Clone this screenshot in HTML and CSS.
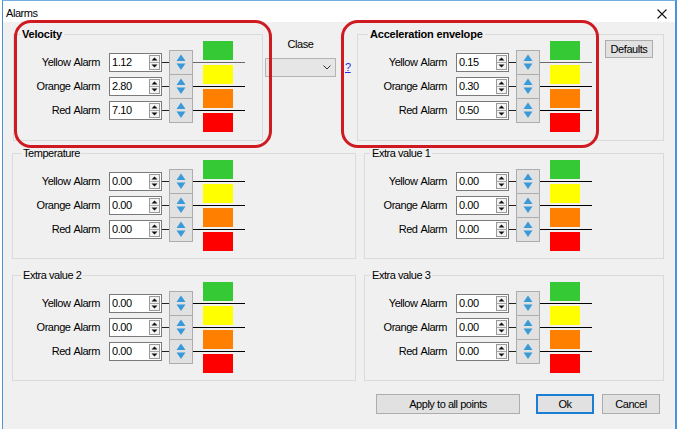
FILE: index.html
```html
<!DOCTYPE html>
<html>
<head>
<meta charset="utf-8">
<title>Alarms</title>
<link rel="stylesheet" href="styles.css">
</head>
<body>
<svg class="defs" width="0" height="0" aria-hidden="true">
  <symbol id="spin" viewBox="0 0 11 15">
    <rect x="0.5" y="0.5" width="10" height="14" fill="#f3f3f3" stroke="#9a9a9a"/>
    <line x1="1" y1="7.5" x2="10" y2="7.5" stroke="#a8a8a8"/>
    <path d="M5.5 2.5 L8.5 5.5 L2.5 5.5 Z" fill="#111"/>
    <path d="M2.5 9.5 L8.5 9.5 L5.5 12.5 Z" fill="#111"/>
  </symbol>
  <symbol id="ud" viewBox="0 0 22 23">
    <path d="M11 3.5 L15.5 10 L6.5 10 Z" fill="#3a9ad9"/>
    <path d="M6.5 12.5 L15.5 12.5 L11 19 Z" fill="#3a9ad9"/>
  </symbol>
</svg>
<div class="window">
  <div class="titlebar">
    <span class="title">Alarms</span>
    <svg class="close" width="10" height="10" viewBox="0 0 10 10"><path d="M0.5 0.5 L9.5 9.5 M9.5 0.5 L0.5 9.5" stroke="#111" stroke-width="1.1" fill="none"/></svg>
  </div>
  <div class="client">
    <div class="row row1">
      <div class="group g-velocity">
        <div class="gtitle bold">Velocity</div>
        <div class="alarms">
          <span class="lbl r1">Yellow Alarm</span>
          <span class="inp r1"><span>1.12</span><svg class="spin"><use href="#spin"/></svg></span>
          <span class="dash r1"></span>
          <span class="sbtn r1"><svg class="ud"><use href="#ud"/></svg></span>
          <span class="line r1 dim"></span>
          <span class="lbl r2">Orange Alarm</span>
          <span class="inp r2"><span>2.80</span><svg class="spin"><use href="#spin"/></svg></span>
          <span class="dash r2"></span>
          <span class="sbtn r2"><svg class="ud"><use href="#ud"/></svg></span>
          <span class="line r2"></span>
          <span class="lbl r3">Red Alarm</span>
          <span class="inp r3"><span>7.10</span><svg class="spin"><use href="#spin"/></svg></span>
          <span class="dash r3"></span>
          <span class="sbtn r3"><svg class="ud"><use href="#ud"/></svg></span>
          <span class="line r3"></span>
          <span class="sw s1"></span><span class="sw s2"></span><span class="sw s3"></span><span class="sw s4"></span>
        </div>
      </div>
      <div class="middle">
        <span class="clase-label">Clase</span>
        <span class="combo"><svg width="8" height="5" viewBox="0 0 8 5"><path d="M0.5 0.5 L4 4 L7.5 0.5" stroke="#333" fill="none"/></svg></span>
        <a class="help" href="#">?</a>
      </div>
      <div class="group g-accel">
        <div class="gtitle bold">Acceleration envelope</div>
        <div class="accel-body">
          <div class="alarms">
            <span class="lbl r1">Yellow Alarm</span>
            <span class="inp r1"><span>0.15</span><svg class="spin"><use href="#spin"/></svg></span>
            <span class="dash r1"></span>
            <span class="sbtn r1"><svg class="ud"><use href="#ud"/></svg></span>
            <span class="line r1 dim"></span>
            <span class="lbl r2">Orange Alarm</span>
            <span class="inp r2"><span>0.30</span><svg class="spin"><use href="#spin"/></svg></span>
            <span class="dash r2"></span>
            <span class="sbtn r2"><svg class="ud"><use href="#ud"/></svg></span>
            <span class="line r2"></span>
            <span class="lbl r3">Red Alarm</span>
            <span class="inp r3"><span>0.50</span><svg class="spin"><use href="#spin"/></svg></span>
            <span class="dash r3"></span>
            <span class="sbtn r3"><svg class="ud"><use href="#ud"/></svg></span>
            <span class="line r3"></span>
            <span class="sw s1"></span><span class="sw s2"></span><span class="sw s3"></span><span class="sw s4"></span>
          </div>
          <span class="btn defaults">Defaults</span>
        </div>
      </div>
    </div>

    <div class="row row2">
      <div class="group g-left">
        <div class="gtitle">Temperature</div>
        <div class="alarms">
          <span class="lbl r1">Yellow Alarm</span>
          <span class="inp r1"><span>0.00</span><svg class="spin"><use href="#spin"/></svg></span>
          <span class="dash r1"></span>
          <span class="sbtn r1"><svg class="ud"><use href="#ud"/></svg></span>
          <span class="line r1"></span>
          <span class="lbl r2">Orange Alarm</span>
          <span class="inp r2"><span>0.00</span><svg class="spin"><use href="#spin"/></svg></span>
          <span class="dash r2"></span>
          <span class="sbtn r2"><svg class="ud"><use href="#ud"/></svg></span>
          <span class="line r2"></span>
          <span class="lbl r3">Red Alarm</span>
          <span class="inp r3"><span>0.00</span><svg class="spin"><use href="#spin"/></svg></span>
          <span class="dash r3"></span>
          <span class="sbtn r3"><svg class="ud"><use href="#ud"/></svg></span>
          <span class="line r3"></span>
          <span class="sw s1"></span><span class="sw s2"></span><span class="sw s3"></span><span class="sw s4"></span>
        </div>
      </div>
      <div class="group g-right">
        <div class="gtitle">Extra value 1</div>
        <div class="alarms">
          <span class="lbl r1">Yellow Alarm</span>
          <span class="inp r1"><span>0.00</span><svg class="spin"><use href="#spin"/></svg></span>
          <span class="dash r1"></span>
          <span class="sbtn r1"><svg class="ud"><use href="#ud"/></svg></span>
          <span class="line r1"></span>
          <span class="lbl r2">Orange Alarm</span>
          <span class="inp r2"><span>0.00</span><svg class="spin"><use href="#spin"/></svg></span>
          <span class="dash r2"></span>
          <span class="sbtn r2"><svg class="ud"><use href="#ud"/></svg></span>
          <span class="line r2"></span>
          <span class="lbl r3">Red Alarm</span>
          <span class="inp r3"><span>0.00</span><svg class="spin"><use href="#spin"/></svg></span>
          <span class="dash r3"></span>
          <span class="sbtn r3"><svg class="ud"><use href="#ud"/></svg></span>
          <span class="line r3"></span>
          <span class="sw s1"></span><span class="sw s2"></span><span class="sw s3"></span><span class="sw s4"></span>
        </div>
      </div>
    </div>

    <div class="row row3">
      <div class="group g-left">
        <div class="gtitle">Extra value 2</div>
        <div class="alarms">
          <span class="lbl r1">Yellow Alarm</span>
          <span class="inp r1"><span>0.00</span><svg class="spin"><use href="#spin"/></svg></span>
          <span class="dash r1"></span>
          <span class="sbtn r1"><svg class="ud"><use href="#ud"/></svg></span>
          <span class="line r1"></span>
          <span class="lbl r2">Orange Alarm</span>
          <span class="inp r2"><span>0.00</span><svg class="spin"><use href="#spin"/></svg></span>
          <span class="dash r2"></span>
          <span class="sbtn r2"><svg class="ud"><use href="#ud"/></svg></span>
          <span class="line r2"></span>
          <span class="lbl r3">Red Alarm</span>
          <span class="inp r3"><span>0.00</span><svg class="spin"><use href="#spin"/></svg></span>
          <span class="dash r3"></span>
          <span class="sbtn r3"><svg class="ud"><use href="#ud"/></svg></span>
          <span class="line r3"></span>
          <span class="sw s1"></span><span class="sw s2"></span><span class="sw s3"></span><span class="sw s4"></span>
        </div>
      </div>
      <div class="group g-right">
        <div class="gtitle">Extra value 3</div>
        <div class="alarms">
          <span class="lbl r1">Yellow Alarm</span>
          <span class="inp r1"><span>0.00</span><svg class="spin"><use href="#spin"/></svg></span>
          <span class="dash r1"></span>
          <span class="sbtn r1"><svg class="ud"><use href="#ud"/></svg></span>
          <span class="line r1"></span>
          <span class="lbl r2">Orange Alarm</span>
          <span class="inp r2"><span>0.00</span><svg class="spin"><use href="#spin"/></svg></span>
          <span class="dash r2"></span>
          <span class="sbtn r2"><svg class="ud"><use href="#ud"/></svg></span>
          <span class="line r2"></span>
          <span class="lbl r3">Red Alarm</span>
          <span class="inp r3"><span>0.00</span><svg class="spin"><use href="#spin"/></svg></span>
          <span class="dash r3"></span>
          <span class="sbtn r3"><svg class="ud"><use href="#ud"/></svg></span>
          <span class="line r3"></span>
          <span class="sw s1"></span><span class="sw s2"></span><span class="sw s3"></span><span class="sw s4"></span>
        </div>
      </div>
    </div>

    <div class="buttons">
      <span class="btn apply">Apply to all points</span>
      <span class="btn ok">Ok</span>
      <span class="btn cancel">Cancel</span>
    </div>
  </div>
  <div class="ring ring-left"></div>
  <div class="ring ring-right"></div>
</div>
</body>
</html>
```

FILE: styles.css
```css
* { box-sizing: border-box; }

html, body {
  margin: 0;
  padding: 0;
  background: #ffffff;
}

body {
  width: 678px;
  height: 429px;
  overflow: hidden;
  font-family: "Liberation Sans", Arial, sans-serif;
  font-size: 11px;
  letter-spacing: -0.45px;
  color: #000;
}

.defs {
  position: absolute;
  width: 0;
  height: 0;
  overflow: hidden;
}

.window {
  position: relative;
  margin-left: 2px;
  width: 675px;
  height: 429px;
  border-top: 1px solid #74aee2;
  border-left: 1px solid #4a94d8;
  border-right: 2px solid #4a94d8;
  background: #f0f0f0;
  overflow: hidden;
}

.titlebar {
  height: 21px;
  background: #ffffff;
  display: flex;
  justify-content: space-between;
  align-items: flex-start;
  padding: 6px 8px 0 3px;
}

.title {
  line-height: 13px;
}

.close {
  margin-top: 2px;
  display: block;
}

.row {
  display: flex;
  align-items: flex-start;
}

.row1 {
  margin-top: 12px;
  padding-left: 10px;
}

.row2,
.row3 {
  padding-left: 9px;
  gap: 8px;
}

.row2 { margin-top: 12px; }
.row3 { margin-top: 16px; }

.group {
  border: 1px solid #dadada;
  height: 106px;
}

.g-velocity { width: 250px; height: 107px; }
.g-accel { width: 307px; height: 107px; }
.g-left { width: 344px; }
.g-right { width: 300px; }

.gtitle {
  width: fit-content;
  margin-top: -7px;
  padding: 0 2px;
  background: #f0f0f0;
  line-height: 13px;
  white-space: nowrap;
}

.g-velocity .gtitle { margin-left: 6px; }
.g-accel .gtitle { margin-left: 10px; }
.g-left .gtitle { margin-left: 8px; }
.g-right .gtitle { margin-left: 5px; }

.bold {
  font-weight: bold;
  letter-spacing: -0.2px;
}

.alarms {
  display: grid;
  grid-template-columns: 80px 9px 53px 7px 24px 10px 30px 12px;
  grid-template-rows: 19px 5px 19px 5px 19px 5px 19px;
}

.g-velocity .alarms { margin-left: 6px; }
.g-left .alarms { margin-left: 7px; }
.g-right .alarms { margin-left: 2px; }
.g-accel .alarms { margin-left: 9px; }

.r1 { grid-row: 2; }
.r2 { grid-row: 4; }
.r3 { grid-row: 6; }

.lbl {
  grid-column: 1;
  justify-self: end;
  align-self: center;
  line-height: 13px;
  white-space: nowrap;
  word-spacing: 1px;
}

.inp {
  grid-column: 3;
  align-self: center;
  height: 19px;
  display: flex;
  align-items: center;
  justify-content: space-between;
  border: 1px solid #7a7a7a;
  background: #ffffff;
  padding: 0 1px 0 2px;
  line-height: 13px;
}

.spin {
  width: 11px;
  height: 15px;
  display: block;
}

.dash {
  grid-column: 4;
  align-self: center;
  height: 1px;
  background: #222;
}

.sbtn {
  grid-column: 5;
  align-self: center;
  height: 25px;
  border: 1px solid #adadad;
  background: #e1e1e1;
  display: flex;
  align-items: center;
  justify-content: center;
}

.ud {
  width: 22px;
  height: 23px;
  display: block;
}

.line {
  grid-column: 6 / span 3;
  align-self: center;
  height: 1px;
  background: #000;
}

.line.dim { background: #6a6a6a; }

.sw { grid-column: 7; }
.s1 { grid-row: 1; background: #36c936; }
.s2 { grid-row: 3; background: #ffff00; }
.s3 { grid-row: 5; background: #ff8000; }
.s4 { grid-row: 7; background: #ff0000; }

.middle {
  width: 94px;
  padding-left: 2px;
  display: grid;
  grid-template-columns: 71px auto;
  column-gap: 9px;
}

.clase-label {
  grid-column: 1;
  grid-row: 1;
  justify-self: center;
  margin-top: 4px;
  line-height: 13px;
}

.combo {
  grid-column: 1;
  grid-row: 2;
  margin-top: 7px;
  height: 19px;
  border: 1px solid #b4b4b4;
  background: #e6e6e6;
  display: flex;
  align-items: center;
  justify-content: flex-end;
  padding-right: 4px;
}

.combo svg { display: block; }

.help {
  grid-column: 2;
  grid-row: 2;
  align-self: center;
  margin-top: 7px;
  line-height: 13px;
  color: #2a2ae0;
  text-decoration: underline;
}

.accel-body {
  display: flex;
  align-items: flex-start;
}

.btn {
  border: 1px solid #adadad;
  background: #e1e1e1;
  display: flex;
  align-items: center;
  justify-content: center;
  line-height: 13px;
  white-space: nowrap;
}

.defaults {
  margin-left: 13px;
  margin-top: -1px;
  width: 48px;
  height: 18px;
}

.buttons {
  margin-top: 13px;
  display: flex;
  justify-content: flex-end;
  padding-right: 15px;
}

.apply { width: 144px; height: 20px; margin-right: 16px; }
.ok { width: 58px; height: 20px; margin-right: 8px; border: 2px solid #1a7fd4; }
.cancel { width: 58px; height: 20px; }

.ring {
  position: absolute;
  border: 3px solid #cf1a22;
  border-radius: 17px;
  pointer-events: none;
}

.ring-left { left: 11px; top: 19px; width: 258px; height: 128px; }
.ring-right { left: 338px; top: 19px; width: 258px; height: 128px; }
```
